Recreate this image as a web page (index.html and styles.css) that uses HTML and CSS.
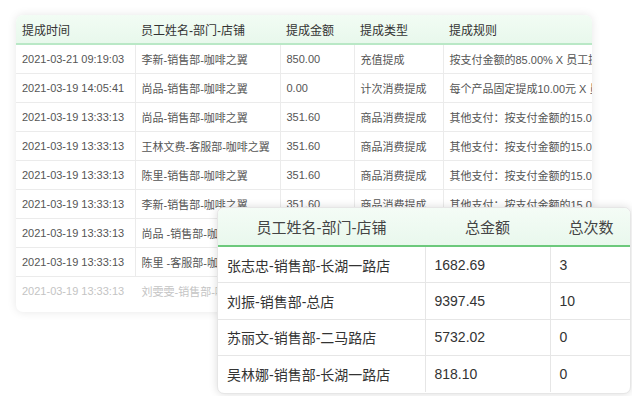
FILE: index.html
```html
<!DOCTYPE html>
<html lang="zh-CN">
<head>
<meta charset="utf-8">
<link rel="stylesheet" href="styles.css">
</head>
<body>
<div class="stage">
  <div class="card back">
    <table class="tbl-back">
      <colgroup>
        <col class="c1"><col class="c2"><col class="c3"><col class="c4"><col class="c5">
      </colgroup>
      <thead>
        <tr><th>提成时间</th><th>员工姓名-部门-店铺</th><th>提成金额</th><th>提成类型</th><th>提成规则</th></tr>
      </thead>
      <tbody>
        <tr><td>2021-03-21 09:19:03</td><td>李新-销售部-咖啡之翼</td><td>850.00</td><td>充值提成</td><td>按支付金额的85.00% X 员工提成比例</td></tr>
        <tr><td>2021-03-19 14:05:41</td><td>尚品-销售部-咖啡之翼</td><td>0.00</td><td>计次消费提成</td><td>每个产品固定提成10.00元 X 员工提成比例</td></tr>
        <tr><td>2021-03-19 13:33:13</td><td>尚品-销售部-咖啡之翼</td><td>351.60</td><td>商品消费提成</td><td>其他支付：按支付金额的15.00%</td></tr>
        <tr><td>2021-03-19 13:33:13</td><td>王林文费-客服部-咖啡之翼</td><td>351.60</td><td>商品消费提成</td><td>其他支付：按支付金额的15.00%</td></tr>
        <tr><td>2021-03-19 13:33:13</td><td>陈里-销售部-咖啡之翼</td><td>351.60</td><td>商品消费提成</td><td>其他支付：按支付金额的15.00%</td></tr>
        <tr><td>2021-03-19 13:33:13</td><td>李新-销售部-咖啡之翼</td><td>351.60</td><td>商品消费提成</td><td>其他支付：按支付金额的15.00%</td></tr>
        <tr><td>2021-03-19 13:33:13</td><td>尚品 -销售部-咖啡之翼</td><td>351.60</td><td>商品消费提成</td><td>其他支付：按支付金额的15.00%</td></tr>
        <tr><td>2021-03-19 13:33:13</td><td>陈里 -客服部-咖啡之翼</td><td>351.60</td><td>商品消费提成</td><td>其他支付：按支付金额的15.00%</td></tr>
        <tr class="faded"><td>2021-03-19 13:33:13</td><td>刘雯雯-销售部-咖啡之翼</td><td>351.60</td><td>商品消费提成</td><td>其他支付：按支付金额的15.00%</td></tr>
      </tbody>
    </table>
  </div>

  <div class="card front">
    <table class="tbl-front">
      <colgroup>
        <col class="f1"><col class="f2"><col class="f3">
      </colgroup>
      <thead>
        <tr><th>员工姓名-部门-店铺</th><th>总金额</th><th>总次数</th></tr>
      </thead>
      <tbody>
        <tr><td>张志忠-销售部-长湖一路店</td><td>1682.69</td><td>3</td></tr>
        <tr><td>刘振-销售部-总店</td><td>9397.45</td><td>10</td></tr>
        <tr><td>苏丽文-销售部-二马路店</td><td>5732.02</td><td>0</td></tr>
        <tr><td>吴林娜-销售部-长湖一路店</td><td>818.10</td><td>0</td></tr>
      </tbody>
    </table>
  </div>
</div>
</body>
</html>
```

FILE: styles.css
```css
* { box-sizing: border-box; }
html, body {
  margin: 0;
  padding: 0;
  background: #ffffff;
}
body {
  font-family: "Liberation Sans", "Noto Sans CJK SC", sans-serif;
}
.stage {
  position: relative;
  width: 632px;
  height: 396px;
  overflow: hidden;
  padding: 15px 0 0 16px;
}
.card {
  background: #ffffff;
  border-radius: 7px;
  overflow: hidden;
}
.back {
  width: 576px;
  height: 297px;
  box-shadow: 0 0 10px rgba(0, 0, 0, 0.10);
}
table {
  border-collapse: collapse;
  table-layout: fixed;
}
.tbl-back {
  width: 680px;
  font-size: 11px;
  color: #555555;
}
.tbl-back .c1 { width: 119px; }
.tbl-back .c2 { width: 145px; }
.tbl-back .c3 { width: 74px; }
.tbl-back .c4 { width: 89px; }
.tbl-back .c5 { width: 253px; }
.tbl-back th {
  height: 29px;
  background: linear-gradient(#f2fcf4, #e8f8ec);
  border-bottom: 2px solid #b9e8c6;
  text-align: left;
  font-weight: normal;
  font-size: 12px;
  color: #333333;
  padding: 0 0 0 6px;
  white-space: nowrap;
  overflow: hidden;
}
.tbl-back td {
  height: 29px;
  padding: 0 0 0 6px;
  border-bottom: 1px solid #ebebeb;
  border-left: 1px solid #ebebeb;
  white-space: nowrap;
  overflow: hidden;
}
.tbl-back td:first-child { border-left: none; }
.tbl-back .faded td {
  color: #c4c4c4;
  border-left-color: transparent;
  border-bottom: none;
}

.front {
  position: absolute;
  left: 217px;
  top: 207px;
  width: 414px;
  height: 187px;
  box-shadow: 0 0 8px rgba(0, 0, 0, 0.14);
  border: 1px solid #e6e6e6;
}
.tbl-front {
  width: 414px;
  font-size: 14px;
  color: #333333;
}
.tbl-front .f1 { width: 207px; }
.tbl-front .f2 { width: 125px; }
.tbl-front .f3 { width: 82px; }
.tbl-front th {
  height: 38px;
  background: linear-gradient(#f4fcf6, #e9f8ed);
  border-bottom: 2px solid #6cc97c;
  font-weight: normal;
  font-size: 15px;
  color: #444444;
  text-align: center;
}
.tbl-front td {
  height: 36.5px;
  padding: 0 0 0 9px;
  border-bottom: 1px solid #e6e6e6;
  border-left: 1px solid #e6e6e6;
  white-space: nowrap;
}
.tbl-front td:first-child { border-left: none; }
.tbl-front tr:last-child td { border-bottom: none; }
```
